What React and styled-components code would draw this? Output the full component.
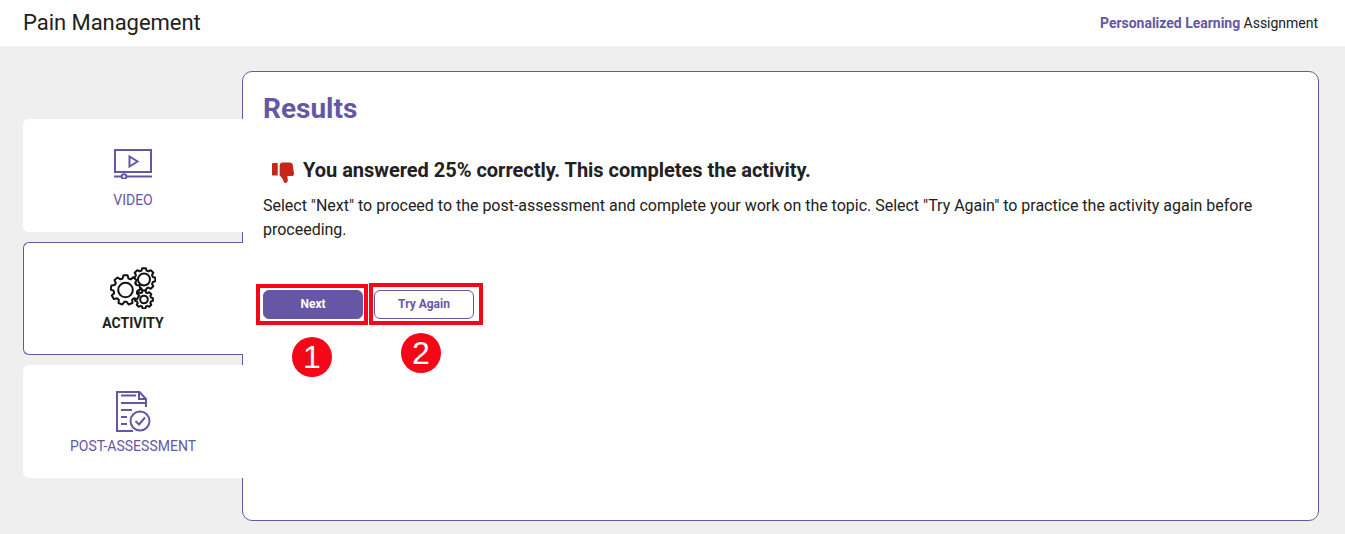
import React from 'react';
import styled, { createGlobalStyle } from 'styled-components';

const Purple = '#6657a6';
const Ink = '#212121';
const Red = '#f40818';

const GlobalStyle = createGlobalStyle`
  html, body {
    margin: 0;
    padding: 0;
    background: #efefef;
    font-family: Roboto, 'Liberation Sans', sans-serif;
    color: ${Ink};
  }
`;

const Header = styled.header`
  height: 46px;
  background: #fff;
  display: flex;
  align-items: center;
  justify-content: space-between;
  padding: 0 27px 0 23px;
`;

const PageTitle = styled.h1`
  margin: 0;
  font-size: 22px;
  font-weight: 400;
  color: ${Ink};
  letter-spacing: -0.04px;
  position: relative;
  top: -1px;
`;

const Tagline = styled.div`
  font-size: 14px;
  color: ${Ink};
  letter-spacing: -0.02px;
  b {
    font-weight: 700;
    color: ${Purple};
  }
`;

const Main = styled.main`
  display: flex;
  align-items: flex-start;
  padding: 25px 26px 13px 23px;
`;

const Tabs = styled.nav`
  width: 220px;
  flex: none;
  margin-top: 48px;
  display: flex;
  flex-direction: column;
  gap: 10px;
  position: relative;
  z-index: 1;
`;

const Tab = styled.div`
  height: 113px;
  box-sizing: border-box;
  background: #fff;
  border-radius: 6px 0 0 6px;
  border: 1px solid ${p => (p.$active ? Purple : '#fff')};
  border-right: 0;
  display: flex;
  flex-direction: column;
  align-items: center;
  padding-top: ${p => p.$top}px;
  padding-right: 1px;
  font-size: 14px;
  font-weight: ${p => (p.$active ? 700 : 400)};
  color: ${p => (p.$active ? Ink : Purple)};
`;

const TabLabel = styled.span`
  margin-top: ${p => p.$gap}px;
  line-height: 16px;
`;

const Panel = styled.section`
  flex: 1;
  height: 450px;
  margin-left: -1px;
  box-sizing: border-box;
  background: #fff;
  border: 1px solid ${Purple};
  border-radius: 10px;
  padding: 19px 20px;
`;

const Heading = styled.h2`
  margin: 0;
  font-size: 28px;
  line-height: 36px;
  font-weight: 700;
  color: ${Purple};
`;

const Feedback = styled.div`
  display: flex;
  align-items: center;
  margin-top: 29px;
  padding-left: 9px;
  gap: 9px;
  font-size: 20px;
  line-height: 28px;
  font-weight: 700;
  letter-spacing: -0.02px;
  color: ${Ink};
`;

const ThumbSvg = styled.svg`
  width: 22px;
  height: 22px;
  flex: none;
  align-self: flex-start;
  margin-top: 6px;
`;

const Copy = styled.p`
  margin: 10px 0 0;
  font-size: 16px;
  line-height: 24px;
  letter-spacing: -0.012px;
  color: ${Ink};
`;

const ButtonRow = styled.div`
  position: relative;
  display: flex;
  gap: 11px;
  margin-top: 48px;
`;

const Button = styled.button`
  width: 100px;
  height: 29px;
  box-sizing: border-box;
  border-radius: 6px;
  border: 1px solid ${Purple};
  background: ${p => (p.$primary ? Purple : '#fff')};
  color: ${p => (p.$primary ? '#fff' : Purple)};
  font-family: inherit;
  font-size: 12px;
  font-weight: 700;
  padding: 0 0 2px;
`;

const Frame = styled.div`
  position: absolute;
  box-sizing: border-box;
  border: 4px solid ${Red};
  left: ${p => p.$left}px;
  top: ${p => p.$top}px;
  width: ${p => p.$width}px;
  height: ${p => p.$height}px;
`;

const Badge = styled.div`
  position: absolute;
  left: ${p => p.$left}px;
  top: ${p => p.$top}px;
  width: 40px;
  height: 40px;
  border-radius: 50%;
  background: ${Red};
  color: #fff;
  font-family: 'Liberation Sans', sans-serif;
  font-size: 32px;
  line-height: 41px;
  text-align: center;
`;

const VideoIcon = () => (
  <svg width="38" height="30" viewBox="0 0 38 30" fill="none" stroke={Purple} strokeWidth="2">
    <rect x="1" y="1" width="36" height="22" />
    <path d="M15.500 7.500v10l8-5z" />
    <path d="M0 27.500h7M13 27.500h25" strokeLinecap="round" />
    <circle cx="10" cy="27.500" r="2.300" />
  </svg>
);

// cog outline built from the tooth count, so the three gears share one shape
const Gear = ({ cx, cy, r, teeth, inner }) => {
  const step = (Math.PI * 2) / teeth;
  let d = '';
  for (let i = 0; i < teeth; i++) {
    const a = i * step - Math.PI / 2;
    const pts = [
      [a - step * 0.36, r * 0.8],
      [a - step * 0.2, r],
      [a + step * 0.2, r],
      [a + step * 0.36, r * 0.8]
    ];
    pts.forEach(([t, rad], j) => {
      const x = cx + Math.cos(t) * rad;
      const y = cy + Math.sin(t) * rad;
      d += `${i === 0 && j === 0 ? 'M' : 'L'}${x.toFixed(2)} ${y.toFixed(2)}`;
    });
  }
  return (
    <>
      <path d={d + 'Z'} strokeLinejoin="round" />
      <circle cx={cx} cy={cy} r={inner} />
    </>
  );
};

const GearsIcon = () => (
  <svg width="46" height="42" viewBox="0 0 46 42" fill="none" stroke="#111" strokeWidth="2">
    <Gear cx={34} cy={12.500} r={11.500} teeth={8} inner={6} />
    <g fill="#fff">
      <Gear cx={34} cy={32.500} r={9} teeth={8} inner={3.800} />
      <Gear cx={15.500} cy={23} r={14.800} teeth={9} inner={7.300} />
    </g>
  </svg>
);

const AssessmentIcon = () => (
  <svg width="36" height="41" viewBox="0 0 36 41" fill="none" stroke={Purple} strokeWidth="2">
    <path d="M31 16V8l-6.500-7H2v39h16" />
    <path d="M24 1v7h7" />
    <path d="M6 4.500h15M6 12h24M6 19h11M6 26h6M6 33h6" />
    <circle cx="25" cy="30" r="9.500" fill="#fff" />
    <path d="M20.500 30l3.500 3.500 6-7" />
  </svg>
);

const ThumbDown = () => (
  <ThumbSvg viewBox="0 0 23 23" fill="#c5271b">
    <rect x="0" y="1" width="6" height="13" rx="0.500" />
    <path d="M8 3.500C8 1.800 9.500 0.500 11 0.500h7.500c1.800 0 3 1 3.200 2.500l1.300 9c0.200 1.500-0.800 2.700-2.300 2.700H16l0.500 4c0.200 2-1.500 3.300-3 3.300-0.800 0-1-0.800-1.200-1.500C11.500 18 10 15.500 8 14z" />
  </ThumbSvg>
);

export default function App() {
  return (
    <>
      <GlobalStyle />
      <Header>
        <PageTitle>Pain Management</PageTitle>
        <Tagline>
          <b>Personalized Learning</b> Assignment
        </Tagline>
      </Header>
      <Main>
        <Tabs>
          <Tab $top={29}>
            <VideoIcon />
            <TabLabel $gap={13}>VIDEO</TabLabel>
          </Tab>
          <Tab $active $top={24}>
            <GearsIcon />
            <TabLabel $gap={6}>ACTIVITY</TabLabel>
          </Tab>
          <Tab $top={25}>
            <AssessmentIcon />
            <TabLabel $gap={6}>POST-ASSESSMENT</TabLabel>
          </Tab>
        </Tabs>
        <Panel>
          <Heading>Results</Heading>
          <Feedback>
            <ThumbDown />
            You answered 25% correctly. This completes the activity.
          </Feedback>
          <Copy>
            Select "Next" to proceed to the post-assessment and complete your work on the topic. Select "Try Again" to practice the activity again before proceeding.
          </Copy>
          <ButtonRow>
            <Button $primary>Next</Button>
            <Button>Try Again</Button>
            <Frame $left={-7} $top={-6} $width={112} $height={41} />
            <Frame $left={106} $top={-7} $width={114} $height={42} />
            <Badge $left={29} $top={47}>1</Badge>
            <Badge $left={138} $top={43}>2</Badge>
          </ButtonRow>
        </Panel>
      </Main>
    </>
  );
}
